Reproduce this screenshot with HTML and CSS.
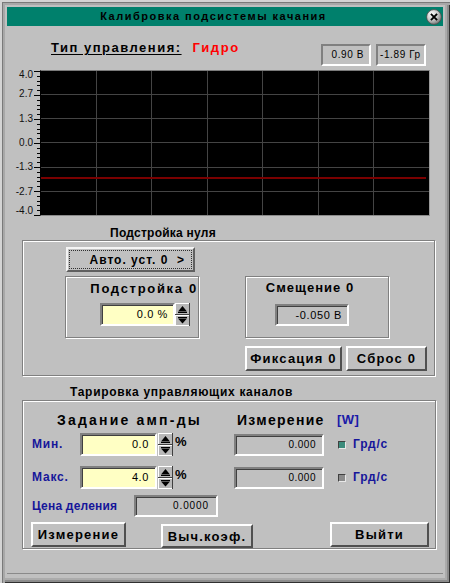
FILE: index.html
```html
<!DOCTYPE html>
<html lang="ru">
<head>
<meta charset="utf-8">
<title>Калибровка подсистемы качания</title>
<link rel="stylesheet" href="styles.css">
</head>
<body>
<div class="window">
  <div class="titlebar">
    <span class="title">Калибровка подсистемы качания</span>
    <span class="close">
      <svg width="16" height="16" viewBox="0 0 16 16">
        <defs>
          <radialGradient id="cg" cx="0.35" cy="0.3" r="0.75">
            <stop offset="0" stop-color="#ffffff"/>
            <stop offset="0.55" stop-color="#c8c8c8"/>
            <stop offset="1" stop-color="#707070"/>
          </radialGradient>
        </defs>
        <circle cx="8" cy="8" r="7.4" fill="url(#cg)" stroke="#4a4a4a" stroke-width="0.8"/>
        <path d="M5.6 5.6 L10.4 10.4 M10.4 5.6 L5.6 10.4" stroke="#000" stroke-width="1.9" stroke-linecap="square"/>
      </svg>
    </span>
  </div>
  <div class="client">
    <div class="header">
      <span class="mode-label">Тип управления:</span>
      <span class="mode-value">Гидро</span>
      <div class="readouts">
        <span class="readout r-volt">0.90 В</span>
        <span class="readout r-deg">-1.89 Гр</span>
      </div>
    </div>

    <div class="chart">
      <div class="axis-labels">
        <span class="al al-top">4.0</span>
        <span class="al">2.7</span>
        <span class="al">1.3</span>
        <span class="al">0.0</span>
        <span class="al">-1.3</span>
        <span class="al">-2.7</span>
        <span class="al al-bottom">-4.0</span>
      </div>
      <div class="axis-ticks">
        <i class="t M"></i><i class="t"></i><i class="t"></i><i class="t"></i><i class="t"></i>
        <i class="t M"></i><i class="t"></i><i class="t"></i><i class="t"></i><i class="t"></i>
        <i class="t M"></i><i class="t"></i><i class="t"></i><i class="t"></i><i class="t"></i>
        <i class="t M"></i><i class="t"></i><i class="t"></i><i class="t"></i><i class="t"></i>
        <i class="t M"></i><i class="t"></i><i class="t"></i><i class="t"></i><i class="t"></i>
        <i class="t M"></i><i class="t"></i><i class="t"></i><i class="t"></i><i class="t"></i>
        <i class="t M"></i>
      </div>
      <div class="plot">
        <i></i><i></i><i></i><i></i><i></i><i></i><i></i>
        <i></i><i></i><i></i><i></i><i></i><i></i><i></i>
        <i></i><i></i><i></i><i></i><i></i><i></i><i></i>
        <i></i><i></i><i></i><i></i><i></i><i></i><i></i>
        <i></i><i></i><i></i><i></i><i></i><i></i><i></i>
        <i></i><i></i><i></i><i></i><i></i><i></i><i></i>
        <div class="trace"></div>
      </div>
    </div>

    <div class="section-title st-zero">Подстройка нуля</div>
    <div class="group g-zero">
      <div class="btn btn-auto"><span class="focus">Авто. уст. 0&nbsp;&nbsp;&gt;</span></div>
      <div class="zero-row">
        <div class="subgroup sg-trim">
          <div class="sg-title">Подстройка 0</div>
          <div class="spin-row">
            <span class="field yellow f-trim">0.0 %</span>
            <svg class="spinner" width="15" height="23" viewBox="0 0 15 23">
              <rect x="0" y="0" width="15" height="23" fill="#404040"/>
              <rect x="0" y="0" width="14" height="11" fill="#ffffff"/>
              <rect x="1" y="1" width="13" height="10" fill="#b8b8b8"/>
              <rect x="0" y="12" width="14" height="11" fill="#ffffff"/>
              <rect x="1" y="13" width="13" height="9" fill="#b8b8b8"/>
              <polygon points="3,8.5 12,8.5 7.5,3" fill="#000"/>
              <rect x="3" y="9" width="9" height="1" fill="#000"/>
              <rect x="3" y="14" width="9" height="1" fill="#000"/>
              <polygon points="3,15.5 12,15.5 7.5,20.5" fill="#000"/>
            </svg>
          </div>
        </div>
        <div class="subgroup sg-offset">
          <div class="sg-title">Смещение 0</div>
          <span class="field f-offset">-0.050 В</span>
        </div>
      </div>
      <div class="zero-buttons">
        <div class="btn btn-fix">Фиксация 0</div>
        <div class="btn btn-reset">Сброс 0</div>
      </div>
    </div>

    <div class="section-title st-tare">Тарировка управляющих каналов</div>
    <div class="group g-tare">
      <div class="tare-head">
        <span class="th-set">Задание амп-ды</span>
        <span class="th-meas">Измерение</span>
        <span class="th-unit">[W]</span>
      </div>
      <div class="tare-row r-min">
        <span class="lbl">Мин.</span>
        <span class="field yellow f-amp">0.0</span>
        <svg class="spinner" width="15" height="23" viewBox="0 0 15 23">
          <rect x="0" y="0" width="15" height="23" fill="#404040"/>
          <rect x="0" y="0" width="14" height="11" fill="#ffffff"/>
          <rect x="1" y="1" width="13" height="10" fill="#b8b8b8"/>
          <rect x="0" y="12" width="14" height="11" fill="#ffffff"/>
          <rect x="1" y="13" width="13" height="9" fill="#b8b8b8"/>
          <polygon points="3,8.5 12,8.5 7.5,3" fill="#000"/>
          <rect x="3" y="9" width="9" height="1" fill="#000"/>
          <rect x="3" y="14" width="9" height="1" fill="#000"/>
          <polygon points="3,15.5 12,15.5 7.5,20.5" fill="#000"/>
        </svg>
        <span class="pct">%</span>
        <span class="field f-meas">0.000</span>
        <span class="check on"></span>
        <span class="unit">Грд/с</span>
      </div>
      <div class="tare-row r-max">
        <span class="lbl">Макс.</span>
        <span class="field yellow f-amp">4.0</span>
        <svg class="spinner" width="15" height="23" viewBox="0 0 15 23">
          <rect x="0" y="0" width="15" height="23" fill="#404040"/>
          <rect x="0" y="0" width="14" height="11" fill="#ffffff"/>
          <rect x="1" y="1" width="13" height="10" fill="#b8b8b8"/>
          <rect x="0" y="12" width="14" height="11" fill="#ffffff"/>
          <rect x="1" y="13" width="13" height="9" fill="#b8b8b8"/>
          <polygon points="3,8.5 12,8.5 7.5,3" fill="#000"/>
          <rect x="3" y="9" width="9" height="1" fill="#000"/>
          <rect x="3" y="14" width="9" height="1" fill="#000"/>
          <polygon points="3,15.5 12,15.5 7.5,20.5" fill="#000"/>
        </svg>
        <span class="pct">%</span>
        <span class="field f-meas">0.000</span>
        <span class="check"></span>
        <span class="unit">Грд/с</span>
      </div>
      <div class="tare-row r-price">
        <span class="lbl lbl-wide">Цена деления</span>
        <span class="field f-price">0.0000</span>
      </div>
      <div class="tare-buttons">
        <div class="btn btn-meas">Измерение</div>
        <div class="btn btn-calc">Выч.коэф.</div>
        <div class="btn btn-exit">Выйти</div>
      </div>
    </div>
  </div>
</div>
</body>
</html>
```
FILE: styles.css
```css
* { box-sizing: border-box; }
html, body { margin: 0; padding: 0; }
body {
  width: 450px;
  height: 583px;
  overflow: hidden;
  background: #c0c0c0;
  font-family: "Liberation Sans", Arial, sans-serif;
  color: #000;
}

.window {
  width: 450px;
  height: 583px;
  padding: 7px 7px 9px 7px;
  background: #c0c0c0;
  display: flex;
  flex-direction: column;
  box-shadow:
    inset 2px 2px 0 #d4d4d4,
    inset 3px 3px 0 #7a7a7a,
    inset 5px 5px 0 #a8a8a8,
    inset -1px -1px 0 #303030,
    inset -3px -3px 0 #8c8c8c,
    inset -5px -5px 0 #ababab;
}

/* title bar */
.titlebar {
  height: 19px;
  background: #00806c;
  display: flex;
  align-items: center;
  flex-shrink: 0;
}
.title {
  flex: 1;
  text-align: center;
  padding-left: 2px;
  padding-right: 8px;
  font-weight: bold;
  font-size: 11px;
  letter-spacing: 1.5px;
  line-height: 19px;
}
.close {
  width: 16px;
  height: 16px;
  margin-right: 1px;
  display: flex;
}

.client {
  flex: 1;
  padding-top: 14px;
  border-bottom: 1px solid #8a8a8a;
}

/* header */
.header {
  display: flex;
  align-items: flex-start;
  height: 30px;
  padding-left: 44px;
  padding-right: 17px;
}
.mode-label {
  font-weight: bold;
  font-size: 13px;
  line-height: 15px;
  letter-spacing: 1.5px;
  text-decoration: underline;
  text-underline-offset: 2px;
}
.mode-value {
  margin-left: 11px;
  font-weight: bold;
  font-size: 13px;
  line-height: 15px;
  letter-spacing: 1.6px;
  color: #ff0000;
}
.readouts {
  margin-left: auto;
  margin-top: 4px;
  display: flex;
  gap: 5px;
}
.readout {
  width: 50px;
  height: 22px;
  border: 2px solid;
  border-color: #808080 #ffffff #ffffff #808080;
  font-size: 10px;
  line-height: 18px;
  letter-spacing: 0.6px;
  white-space: nowrap;
  overflow: hidden;
}
.r-volt { text-align: right; padding-right: 5px; }
.r-deg { text-align: left; padding-left: 2px; }

/* chart */
.chart {
  display: flex;
  height: 146px;
}
.axis-labels {
  width: 26px;
  flex: none;
  display: flex;
  flex-direction: column;
  font-size: 10px;
  line-height: 10px;
  color: #101010;
}
.al {
  flex: 2;
  display: flex;
  align-items: center;
  justify-content: flex-end;
}
.al-top { flex: 1; align-items: flex-start; }
.al-bottom { flex: 1; align-items: flex-end; }
.axis-ticks {
  width: 7px;
  flex: none;
  display: flex;
  flex-direction: column;
  justify-content: space-between;
  align-items: flex-end;
  padding-top: 1px;
}
.t {
  display: block;
  flex: none;
  width: 3px;
  height: 1px;
  background: #000;
}
.t.M { width: 6px; }

.plot {
  position: relative;
  width: 390px;
  flex: none;
  display: grid;
  grid-template-columns: repeat(7, 1fr);
  grid-template-rows: repeat(6, 1fr);
  gap: 1px;
  background: #444444;
  border-top: 1px solid #7a7a7a;
  border-left: 1px solid #000;
  border-right: 1px solid #9a9a9a;
  border-bottom: 1px solid #8a8a8a;
}
.plot i { background: #000; display: block; }
.trace {
  position: absolute;
  left: 0;
  right: 3px;
  top: 106px;
  height: 2px;
  background: #7a0000;
}

/* section titles & groups */
.section-title {
  font-weight: bold;
  font-size: 12px;
  line-height: 14px;
}
.st-zero { margin-top: 10px; margin-left: 103px; letter-spacing: 0.25px; }
.st-tare { margin-top: 9px; margin-bottom: 1px; margin-left: 63px; letter-spacing: 0.7px; }

.group {
  margin-left: 15px;
  border: 1px solid #808080;
  box-shadow: inset 1px 1px 0 #ffffff, 1px 1px 0 #ffffff;
}
.g-zero {
  width: 413px;
  height: 136px;
  padding-top: 6px;
}
.g-tare {
  width: 414px;
  height: 149px;
  padding-top: 11px;
}

/* buttons */
.btn {
  display: flex;
  align-items: center;
  justify-content: center;
  background: #c0c0c0;
  border: 2px solid;
  border-color: #ffffff #505050 #505050 #ffffff;
  font-weight: bold;
  font-size: 13px;
  letter-spacing: 1.2px;
  white-space: nowrap;
}
.btn-auto {
  margin-left: 43px;
  width: 129px;
  height: 25px;
  padding: 1px;
  border-color: #f4f4f4 #606060 #606060 #f4f4f4;
}
.focus {
  flex: 1;
  align-self: stretch;
  display: flex;
  align-items: center;
  justify-content: flex-end;
  padding-right: 6px;
  border: 1px dotted #303030;
  font-size: 12px;
  letter-spacing: 1px;
}

.zero-row {
  display: flex;
  margin-top: 4px;
}
.subgroup {
  height: 62px;
  border: 1px solid #808080;
  box-shadow: inset 1px 1px 0 #ffffff, 1px 1px 0 #ffffff;
}
.sg-title {
  font-weight: bold;
  font-size: 13px;
  line-height: 15px;
  letter-spacing: 1px;
}
.sg-trim {
  margin-left: 42px;
  width: 134px;
  padding-right: 8px;
}
.sg-trim .sg-title {
  margin-top: 4px;
  text-align: right;
  margin-right: -8px;
  letter-spacing: 1.7px;
}
.spin-row {
  display: flex;
  justify-content: flex-end;
  margin-top: 7px;
}
.sg-offset {
  margin-left: 46px;
  width: 144px;
  display: flex;
  flex-direction: column;
}
.sg-offset .sg-title {
  margin-top: 3px;
  text-align: center;
  padding-right: 14px;
}

.field {
  display: block;
  height: 22px;
  border: 2px solid;
  border-color: #808080 #ffffff #ffffff #808080;
  box-shadow: inset 1px 1px 0 #404040;
  font-size: 11px;
  line-height: 18px;
  letter-spacing: 0.6px;
  text-align: right;
  padding-right: 5px;
  white-space: nowrap;
}
.yellow { background: #ffffc4; }
.f-trim { width: 75px; height: 23px; line-height: 19px; }
.f-offset { margin-top: 9px; margin-left: 29px; width: 74px; }
.spinner { display: block; flex-shrink: 0; }

.zero-buttons {
  display: flex;
  justify-content: flex-end;
  gap: 4px;
  margin-top: 8px;
  margin-right: 7px;
}
.btn-fix { width: 97px; height: 25px; }
.btn-reset { width: 81px; height: 25px; }

/* tare group */
.tare-head {
  display: flex;
  font-weight: bold;
  font-size: 14px;
  line-height: 16px;
}
.th-set { margin-left: 34px; width: 180px; letter-spacing: 2.2px; }
.th-meas { width: 100px; letter-spacing: 1.3px; }
.th-unit { color: #1a1aa8; font-size: 13px; letter-spacing: 0.5px; }

.tare-row {
  display: flex;
  align-items: flex-start;
  height: 23px;
  margin-left: 9px;
}
.r-min { margin-top: 5px; }
.r-max { margin-top: 10px; }
.r-price { margin-top: 6px; height: 22px; }

.lbl {
  width: 48px;
  font-weight: bold;
  font-size: 12px;
  line-height: 23px;
  letter-spacing: 0.8px;
  color: #16169a;
}
.lbl-wide { width: 102px; line-height: 22px; letter-spacing: 0.2px; }
.f-amp { width: 77px; height: 23px; line-height: 19px; padding-right: 6px; }
.tare-row .spinner { margin-left: 1px; }
.pct {
  width: 61px;
  padding-left: 2px;
  font-weight: bold;
  font-size: 13px;
  line-height: 16px;
  margin-top: 1px;
}
.f-meas {
  width: 90px;
  margin-top: 1px;
  padding-right: 6px;
  font-size: 10px;
  letter-spacing: 0.5px;
}
.check {
  align-self: center;
  margin-left: 14px;
  width: 8px;
  height: 8px;
  border-top: 1px solid #404040;
  border-left: 1px solid #404040;
  border-right: 1px solid #e8e8e8;
  border-bottom: 1px solid #e8e8e8;
  background: #8a8a8a;
}
.check.on { background: #3c8c7c; }
.unit {
  margin-left: 7px;
  font-weight: bold;
  font-size: 12px;
  line-height: 23px;
  letter-spacing: 0.8px;
  color: #16169a;
}
.f-price {
  width: 84px;
  padding-right: 7px;
  font-size: 10px;
  letter-spacing: 0.9px;
}

.tare-buttons {
  display: flex;
  align-items: flex-start;
  margin-top: 5px;
  margin-left: 8px;
}
.btn-meas { width: 95px; height: 25px; }
.btn-calc { width: 92px; height: 24px; margin-left: 35px; margin-top: 2px; }
.btn-exit { width: 99px; height: 25px; margin-left: 77px; }
```
